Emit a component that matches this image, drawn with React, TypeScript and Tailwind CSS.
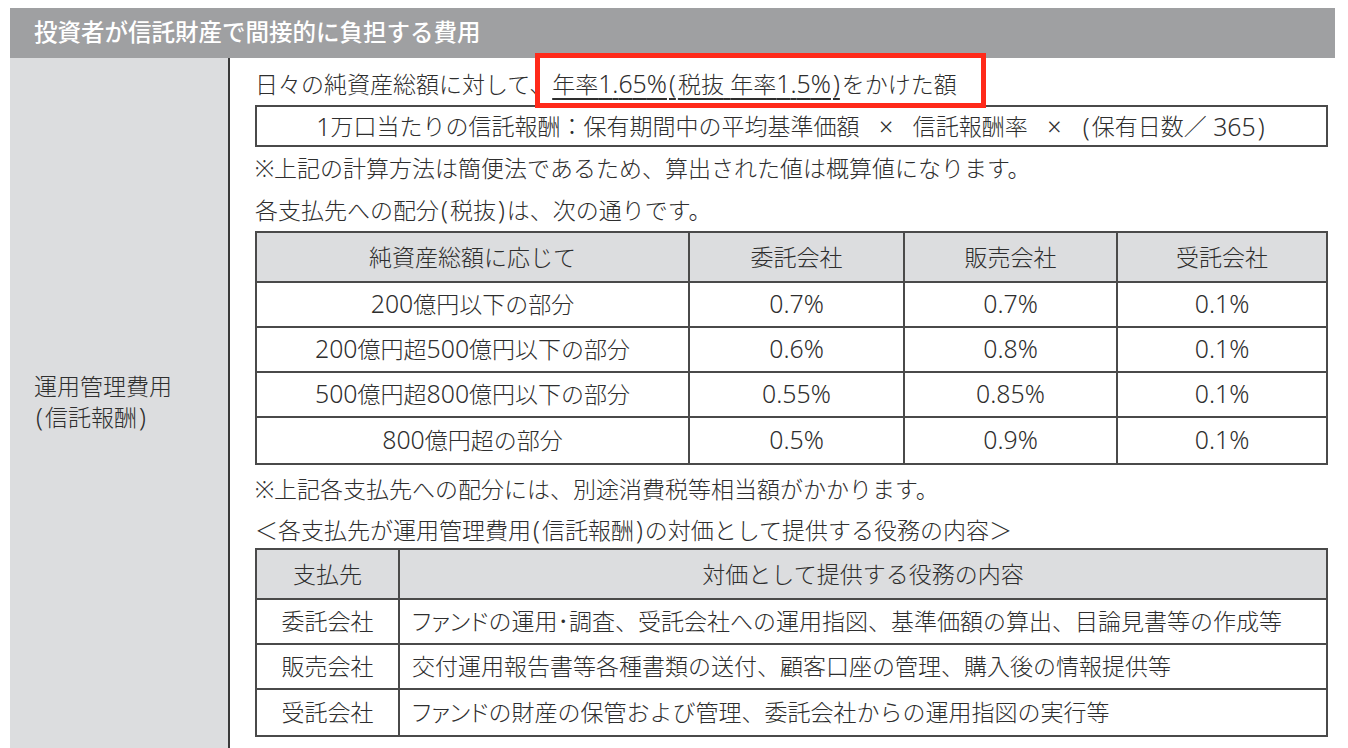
import React from "react";

const LATIN = /[0-9A-Za-z.%()× ]/;

function J({ t }: { t: string }) {
  const out: React.ReactNode[] = [];
  let buf = "";
  let latin = false;
  let k = 0;
  const flush = () => {
    if (!buf) return;
    if (latin) {
      const parts: React.ReactNode[] = [];
      Array.from(buf).forEach((c, i) => {
        if (c === "(" || c === ")") {
          parts.push(
            <span key={i} className="px-[2px]">
              {c}
            </span>
          );
        } else if (c === "×") {
          parts.push(
            <span key={i} className="px-[13px]">
              {c}
            </span>
          );
        } else {
          parts.push(c);
        }
      });
      out.push(
        <span key={k++} className="text-[1.08em] leading-none whitespace-pre">
          {parts}
        </span>
      );
    } else {
      out.push(<React.Fragment key={k++}>{buf}</React.Fragment>);
    }
    buf = "";
  };
  Array.from(t).forEach((c) => {
    const isL = LATIN.test(c);
    if (isL !== latin) {
      flush();
      latin = isL;
    }
    buf += c;
  });
  flush();
  return <>{out}</>;
}

function P({ t }: { t: string }) {
  return <span style={{ fontFeatureSettings: '"palt"' }}>{t}</span>;
}

const rows1 = [
  ["200億円以下の部分", "0.7%", "0.7%", "0.1%"],
  ["200億円超500億円以下の部分", "0.6%", "0.8%", "0.1%"],
  ["500億円超800億円以下の部分", "0.55%", "0.85%", "0.1%"],
  ["800億円超の部分", "0.5%", "0.9%", "0.1%"],
];

const rows2: [string, React.ReactNode][] = [
  [
    "委託会社",
    <>
      <P t="ファンド" />
      の運用･調査、受託会社への運用指図、基準価額の算出、目論見書等の作成等
    </>,
  ],
  ["販売会社", "交付運用報告書等各種書類の送付、顧客口座の管理、購入後の情報提供等"],
  [
    "受託会社",
    <>
      <P t="ファンド" />
      の財産の保管および管理、委託会社からの運用指図の実行等
    </>,
  ],
];

const B = "border-[#4a4a4a]";

export default function App() {
  return (
    <div
      className="w-[1348px] h-[748px] overflow-hidden bg-white text-[#2e2e2e]"
      style={{ fontFamily: '"Noto Sans", "Noto Sans CJK JP", sans-serif' }}
    >
      <div className="pt-[8px] pl-[10px] w-[1335px] h-full flex flex-col">
        <div className="h-[50px] bg-[#9fa0a2] flex items-center pl-[24px] text-white text-[23.5px] font-medium shrink-0">
          投資者が信託財産で間接的に負担する費用
        </div>
        <div className="flex flex-1">
          <div className="w-[220px] bg-[#dcdddf] border-r-2 border-[#3a3a3a] flex flex-col justify-center pl-[24px] text-[23px] leading-[31px] font-light pb-[2px]">
            <div>運用管理費用</div>
            <div>
              <J t="(信託報酬)" />
            </div>
          </div>
          <div className="flex-1 pl-[25px] pr-[7px] pt-[5px] text-[23px] font-light">
            <div className="relative h-[42px] leading-[42px] whitespace-nowrap">
              日々の純資産総額に対して、
              <span className="underline underline-offset-[5px] decoration-[1.5px]">
                <J t="年率1.65%(税抜 年率1.5%)" />
              </span>
              をかけた額
              <div className="absolute left-[280px] top-[-10px] w-[451px] h-[55px] border-[5px] border-[#ff2a1a]" />
            </div>
            <div className={"h-[42px] border-2 flex items-center justify-center whitespace-nowrap " + B}>
              <J t="1万口当たりの信託報酬：保有期間中の平均基準価額 × 信託報酬率 × (保有日数／ 365)" />
            </div>
            <div className="h-[43px] leading-[43px] whitespace-nowrap">
              ※上記の計算方法は簡便法であるため、算出された値は概算値になります。
            </div>
            <div className="h-[41px] leading-[41px] whitespace-nowrap">
              <J t="各支払先への配分(税抜)は、次の通りです。" />
            </div>
            <div className={"border-2 " + B}>
              <div className={"grid grid-cols-[431px_215px_213px_1fr] h-[50px] bg-[#dcdddf] border-b-2 " + B}>
                <div className="flex items-center justify-center">純資産総額に応じて</div>
                <div className={"flex items-center justify-center border-l-2 " + B}>委託会社</div>
                <div className={"flex items-center justify-center border-l-2 " + B}>販売会社</div>
                <div className={"flex items-center justify-center border-l-2 " + B}>受託会社</div>
              </div>
              {rows1.map((r, i) => (
                <div
                  key={i}
                  className={
                    "grid grid-cols-[431px_215px_213px_1fr] h-[45px] " +
                    (i < rows1.length - 1 ? "border-b-2 border-[#4a4a4a]" : "")
                  }
                >
                  <div className="flex items-center justify-center whitespace-nowrap">
                    <span>
                      <J t={r[0]} />
                    </span>
                  </div>
                  {[r[1], r[2], r[3]].map((v, j) => (
                    <div key={j} className={"flex items-center justify-center border-l-2 " + B}>
                      <span>
                        <J t={v} />
                      </span>
                    </div>
                  ))}
                </div>
              ))}
            </div>
            <div className="mt-[3px] h-[42px] leading-[42px] whitespace-nowrap">
              ※上記各支払先への配分には、別途消費税等相当額がかかります。
            </div>
            <div className="h-[38px] leading-[40px] whitespace-nowrap">
              ＜各支払先が運用管理費用<J t="(信託報酬)" />の対価として提供する役務の内容＞
            </div>
            <div className={"border-2 " + B}>
              <div className={"grid grid-cols-[141px_1fr] h-[50px] bg-[#dcdddf] border-b-2 " + B}>
                <div className="flex items-center justify-center">支払先</div>
                <div className={"flex items-center justify-center border-l-2 " + B}>対価として提供する役務の内容</div>
              </div>
              {rows2.map((r, i) => (
                <div
                  key={i}
                  className={
                    "grid grid-cols-[141px_1fr] h-[45px] " +
                    (i < rows2.length - 1 ? "border-b-2 border-[#4a4a4a]" : "")
                  }
                >
                  <div className="flex items-center justify-center">{r[0]}</div>
                  <div className={"flex items-center pl-[12px] border-l-2 whitespace-nowrap " + B}>
                    <span>{r[1]}</span>
                  </div>
                </div>
              ))}
            </div>
          </div>
        </div>
      </div>
    </div>
  );
}
